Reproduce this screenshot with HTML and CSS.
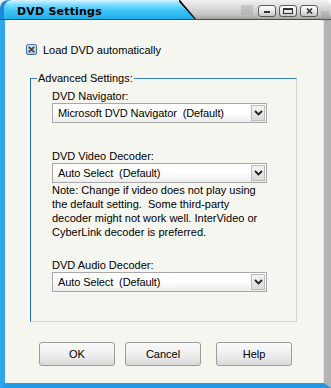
FILE: index.html
```html
<!DOCTYPE html>
<html lang="en">
<head>
    <meta charset="UTF-8">
    <title>DVD Settings</title>
    <link rel="stylesheet" href="styles.css">
</head>
<body>
    <div class="window">
        <div class="titlebar">
            <div class="title-tab">DVD Settings</div>
            <div class="title-rest">
                <span class="grip"></span>
                <span class="ctrl"><svg width="8" height="6" viewBox="0 0 8 6"><rect x="1" y="3" width="6" height="2" fill="#333"/></svg></span>
                <span class="ctrl"><svg width="10" height="6" viewBox="0 0 10 6"><rect x="0.5" y="0.5" width="9" height="5" fill="none" stroke="#333"/><rect x="1" y="1" width="8" height="1" fill="#333"/></svg></span>
                <span class="ctrl"><svg width="7" height="6" viewBox="0 0 7 6"><path d="M1 0.5 L6 5.5 M6 0.5 L1 5.5" stroke="#333" stroke-width="1.6"/></svg></span>
                <span class="grip small"></span>
            </div>
        </div>
        <div class="client">
            <label class="check-row">
                <span class="checkbox"><svg width="7" height="7" viewBox="0 0 7 7"><path d="M0.8 0.8 L6.2 6.2 M6.2 0.8 L0.8 6.2" stroke="#4a4a4a" stroke-width="1.8"/></svg></span>
                Load DVD automatically
            </label>

            <fieldset class="group">
                <legend>Advanced Settings:</legend>
                <div class="group-body">
                    <div class="field-label">DVD Navigator:</div>
                    <div class="combo">
                        <span class="combo-text">Microsoft DVD Navigator&nbsp; (Default)</span>
                        <span class="combo-btn"><svg width="9" height="6" viewBox="0 0 9 6"><path d="M1 1 L4.5 4.5 L8 1" fill="none" stroke="#222" stroke-width="1.8"/></svg></span>
                    </div>

                    <div class="field-label gap">DVD Video Decoder:</div>
                    <div class="combo">
                        <span class="combo-text">Auto Select&nbsp; (Default)</span>
                        <span class="combo-btn"><svg width="9" height="6" viewBox="0 0 9 6"><path d="M1 1 L4.5 4.5 L8 1" fill="none" stroke="#222" stroke-width="1.8"/></svg></span>
                    </div>
                    <p class="note">Note: Change if video does not play using<br>the default setting.&nbsp; Some third-party<br>decoder might not work well. InterVideo or<br>CyberLink decoder is preferred.</p>

                    <div class="field-label gap-big">DVD Audio Decoder:</div>
                    <div class="combo">
                        <span class="combo-text">Auto Select&nbsp; (Default)</span>
                        <span class="combo-btn"><svg width="9" height="6" viewBox="0 0 9 6"><path d="M1 1 L4.5 4.5 L8 1" fill="none" stroke="#222" stroke-width="1.8"/></svg></span>
                    </div>
                </div>
            </fieldset>

            <div class="buttons">
                <button class="btn">OK</button>
                <button class="btn">Cancel</button>
                <button class="btn help">Help</button>
            </div>
        </div>
    </div>
</body>
</html>
```

FILE: styles.css
```css
body {
    margin: 0;
    background: #fff;
    font-family: "Liberation Sans", Arial, sans-serif;
    font-size: 11px;
    color: #000;
}

.window {
    width: 331px;
    height: 388px;
    display: flex;
    flex-direction: column;
    box-sizing: border-box;
}

/* Title bar */
.titlebar {
    height: 19px;
    display: flex;
    border-bottom: 1px solid #4a4a4a;
    border-top-right-radius: 6px;
    background: linear-gradient(#f2f2f2, #dedede 35%, #c6c6c6 75%, #a4a4a4);
}

.title-tab {
    width: 196px;
    flex-shrink: 0;
    box-sizing: border-box;
    padding: 5px 0 0 17px;
    font-family: "DejaVu Sans", sans-serif;
    font-weight: bold;
    font-size: 11px;
    line-height: 13px;
    letter-spacing: 0.2px;
    color: #000;
    border-top-left-radius: 8px;
    clip-path: polygon(0 0, 180px 0, 196px 100%, 0 100%);
    background:
        linear-gradient(to top right, transparent 44%, #000 47%) right top / 17px 100% no-repeat,
        linear-gradient(#d6f4ff, #7fdcff 25%, #3cc4f6 55%, #22b0ee);
    box-shadow: inset 4px 0 0 #1e88d8;
}

.title-rest {
    flex: 1;
    display: flex;
    align-items: flex-start;
    justify-content: flex-end;
    padding: 5px 2px 0 0;
    gap: 3px;
}

.grip {
    width: 12px;
    height: 10px;
    margin-right: 2px;
    background: radial-gradient(circle, #8a8a8a 0.6px, transparent 0.9px) 0 0 / 2px 2px;
    opacity: 0.45;
}

.grip.small {
    width: 8px;
    margin: 6px 0 0 0;
}

.ctrl {
    width: 16px;
    height: 10px;
    border: 1px solid #5c5c5c;
    border-radius: 3px;
    background: linear-gradient(#ffffff, #e8e8e8 50%, #c8c8c8);
    display: flex;
    align-items: center;
    justify-content: center;
}

/* Client area with frame */
.client {
    flex: 1;
    background: #f6f6f1;
    border-left: 5px solid #2da6ea;
    border-right: 7px solid #b4b4b4;
    border-bottom: 5px solid #1f9ae4;
    box-shadow: inset 1px 0 0 #ffffff, inset -1px 0 0 #e4e4e0;
    padding: 23px 0 0 0;
    display: flex;
    flex-direction: column;
}

.check-row {
    display: flex;
    align-items: center;
    margin-left: 21px;
    height: 13px;
    gap: 6px;
}

.checkbox {
    width: 9px;
    height: 9px;
    border: 1px solid #3c78b4;
    border-radius: 2px;
    background: linear-gradient(#e0e0e0, #c4c4c4);
    display: flex;
    align-items: center;
    justify-content: center;
}

/* Group box */
.group {
    margin: 16px 27px 0 25px;
    padding: 0;
    height: 250px;
    box-sizing: border-box;
    border: 1px solid #d6d6cc;
    border-top-color: #3a7fc0;
    border-left-color: #2468b4;
}

.group legend {
    padding: 0 1px;
    margin-left: 6px;
    font-size: 11px;
    line-height: 13px;
}

.group-body {
    padding: 5px 0 0 21px;
}

.field-label {
    line-height: 13px;
}

.field-label.gap {
    margin-top: 27px;
}

.field-label.gap-big {
    margin-top: 20px;
}

.combo {
    width: 215px;
    height: 20px;
    box-sizing: border-box;
    border: 1px solid #a8a8a8;
    background: linear-gradient(#ffffff 50%, #ececec);
    display: flex;
    align-items: center;
    justify-content: space-between;
    padding: 0 1px 0 5px;
}

.combo-text {
    font-size: 11px;
    letter-spacing: -0.1px;
}

.combo-btn {
    width: 14px;
    height: 16px;
    box-sizing: border-box;
    border: 1px solid #bcbcbc;
    background: linear-gradient(#f4f4f4, #dadada);
    display: flex;
    align-items: center;
    justify-content: center;
}

.note {
    margin: 0;
    line-height: 14px;
    font-size: 11px;
}

/* Dialog buttons */
.buttons {
    display: flex;
    margin: 20px 0 0 34px;
}

.btn {
    width: 76px;
    height: 24px;
    margin-right: 10px;
    font-family: "Liberation Sans", Arial, sans-serif;
    font-size: 11px;
    color: #000;
    border: 1px solid #9c9c9c;
    border-radius: 3px;
    background: linear-gradient(#fafafa, #ececec 60%, #d8d8d8);
}

.btn.help {
    margin-left: 5px;
}
```
